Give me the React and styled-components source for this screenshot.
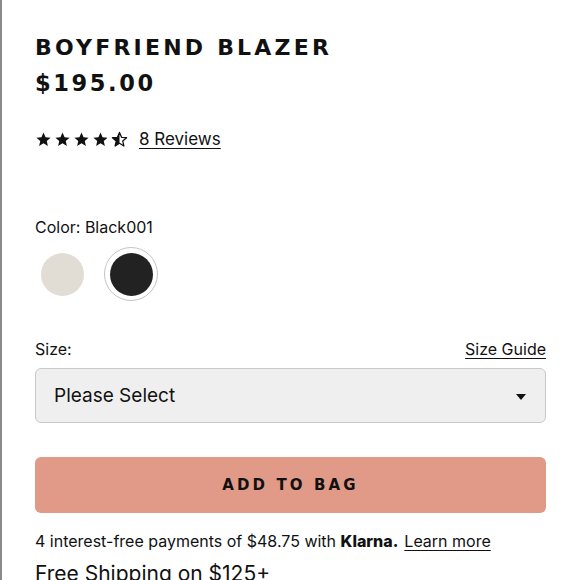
import React from "react";
import styled, { createGlobalStyle } from "styled-components";

const Global = createGlobalStyle`
  html, body { margin: 0; padding: 0; background: #fff; }
  body { font-family: Inter, "Liberation Sans", sans-serif; color: #111; overflow: hidden; }
`;

const Page = styled.div`
  width: 580px;
  height: 580px;
  box-sizing: border-box;
  border-left: 2px solid #8a8a8a;
  padding: 35px 34px 0 33px;
  overflow: hidden;
`;

const Title = styled.h1`
  margin: 0;
  font-family: "DejaVu Sans", sans-serif;
  font-weight: 700;
  font-size: 22px;
  letter-spacing: 3.2px;
  line-height: 26px;
`;

const Price = styled.div`
  margin-top: 8px;
  font-family: "DejaVu Sans", sans-serif;
  font-weight: 700;
  font-size: 22.5px;
  letter-spacing: 2.6px;
  line-height: 28px;
`;

const RatingRow = styled.div`
  display: flex;
  align-items: center;
  gap: 11px;
  margin-top: 32px;
`;

const Stars = styled.div`
  display: flex;
  gap: 2px;
`;

const TextLink = styled.a`
  color: #111;
  text-decoration: underline;
  text-underline-offset: 3px;
  text-decoration-thickness: 1px;
  font-size: ${(p) => p.$size || 16}px;
  cursor: pointer;
`;

const Label = styled.div`
  font-size: 16px;
  line-height: 20px;
`;

const ColorSection = styled.div`
  margin-top: 68px;
`;

const Swatches = styled.div`
  display: flex;
  align-items: center;
  gap: 15px;
  margin-top: 10px;
`;

const Swatch = styled.button`
  width: 54px;
  height: 54px;
  border-radius: 50%;
  border: 1px solid ${(p) => (p.$selected ? "#c4c4c4" : "transparent")};
  background: transparent;
  padding: 0;
  display: flex;
  align-items: center;
  justify-content: center;
  cursor: pointer;
  &::after {
    content: "";
    width: 43px;
    height: 43px;
    border-radius: 50%;
    background: ${(p) => p.$color};
  }
`;

const SizeHeader = styled.div`
  display: flex;
  justify-content: space-between;
  align-items: baseline;
  margin-top: 38px;
`;

const Select = styled.div`
  margin-top: 9px;
  height: 55px;
  box-sizing: border-box;
  border: 1px solid #c9c9c9;
  border-radius: 6px;
  background: #efefef;
  display: flex;
  align-items: center;
  justify-content: space-between;
  padding: 0 19px 0 18px;
  font-size: 19px;
`;

const Caret = styled.span`
  width: 0;
  height: 0;
  border-left: 5px solid transparent;
  border-right: 5px solid transparent;
  border-top: 6px solid #111;
  margin-top: 2px;
`;

const AddButton = styled.button`
  margin-top: 34px;
  width: 100%;
  height: 56px;
  border: none;
  border-radius: 6px;
  background: #e09a87;
  color: #111;
  font-family: "DejaVu Sans", sans-serif;
  font-weight: 700;
  font-size: 15px;
  letter-spacing: 3.1px;
  cursor: pointer;
`;

const Klarna = styled.div`
  margin-top: 18px;
  font-size: 16px;
  line-height: 20px;
  display: flex;
  align-items: baseline;
  gap: 6px;
`;

const KlarnaBrand = styled.b`
  font-weight: 800;
`;

const Shipping = styled.div`
  margin-top: 10px;
  font-size: 21px;
  line-height: 26px;
`;

const STAR = "M12 2l2.9 6.9 7.1.6-5.4 4.7 1.6 7-6.2-3.8-6.2 3.8 1.6-7L2 9.5l7.1-.6z";

const Star = ({ half }) => (
  <svg width="17" height="17" viewBox="0 0 24 24">
    <defs>
      <clipPath id="halfclip">
        <rect x="0" y="0" width="12" height="24" />
      </clipPath>
    </defs>
    {half ? (
      <>
        <path d={STAR} fill="none" stroke="#111" strokeWidth="1.8" strokeLinejoin="round" />
        <path d={STAR} fill="#111" clipPath="url(#halfclip)" />
      </>
    ) : (
      <path d={STAR} fill="#111" />
    )}
  </svg>
);

export default function App() {
  return (
    <>
      <Global />
      <Page>
        <Title>BOYFRIEND BLAZER</Title>
        <Price>$195.00</Price>
        <RatingRow>
          <Stars>
            <Star />
            <Star />
            <Star />
            <Star />
            <Star half />
          </Stars>
          <TextLink $size={17}>8 Reviews</TextLink>
        </RatingRow>
        <ColorSection>
          <Label>Color: Black001</Label>
          <Swatches>
            <Swatch $color="#e1ddd5" aria-label="Cream" />
            <Swatch $color="#222" $selected aria-label="Black001" />
          </Swatches>
        </ColorSection>
        <SizeHeader>
          <Label>Size:</Label>
          <TextLink $size={16}>Size Guide</TextLink>
        </SizeHeader>
        <Select>
          <span>Please Select</span>
          <Caret />
        </Select>
        <AddButton>ADD TO BAG</AddButton>
        <Klarna>
          <span>
            4 interest-free payments of $48.75 with <KlarnaBrand>Klarna.</KlarnaBrand>
          </span>
          <TextLink $size={16}>Learn more</TextLink>
        </Klarna>
        <Shipping>Free Shipping on $125+</Shipping>
      </Page>
    </>
  );
}
